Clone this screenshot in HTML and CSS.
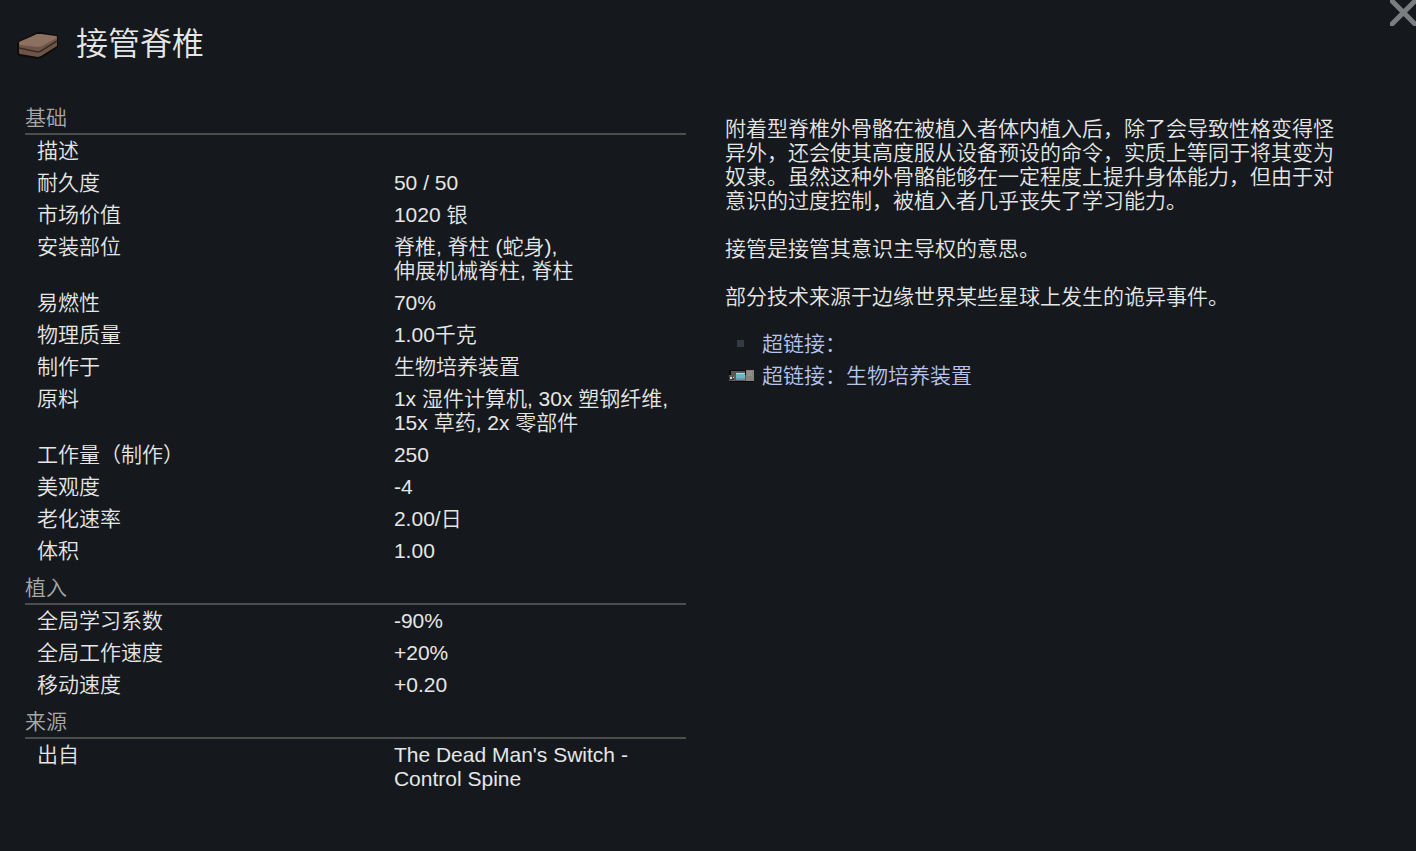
FILE: index.html
```html
<!DOCTYPE html>
<html lang="zh-CN">
  <head>
    <meta charset="utf-8">
    <meta name="viewport" content="width=device-width, initial-scale=1">
    <title>接管脊椎</title>

    <link rel="stylesheet" href="styles.css">
  </head>
  <body>
    <button class="fechar" type="button" aria-label="关闭">
      <svg width="26" height="26" viewBox="0 0 26 26">
        <path d="M0 -1 L27 26 M27 -1 L0 26" stroke="#7b7d7f" stroke-width="5" fill="none"/>
      </svg>
    </button>

    <header class="topo">
      <svg class="topo-icone" width="42" height="32" viewBox="0 0 42 32">
        <path d="M0 14 L20 4 L24 4 L40 7 L41 9 V19 L25 30 L21 31 L2 28 L0 26 Z" fill="#0e0c0b"/>
        <path d="M2 14 L21 18 L40 8 V18 L24 28 L21 29 L3 26 L2 25 Z" fill="#6d5648"/>
        <path d="M2 20 L21 24 L24 23 L40 13" stroke="#3a2c25" stroke-width="1.5" fill="none"/>
        <path d="M2 14 L20 6 L24 6 L39 8 L40 10 L25 18 L21 19 L3 17 Z" fill="#8c7060"/>
      </svg>
      <h1 class="titulo">接管脊椎</h1>
    </header>

    <main class="conteudo">
      <div class="atributos">
        <h2 class="secao">基础</h2>
        <table class="tabela">
          <tr><th scope="row">描述</th><td></td></tr>
          <tr><th scope="row">耐久度</th><td>50 / 50</td></tr>
          <tr><th scope="row">市场价值</th><td>1020 银</td></tr>
          <tr><th scope="row">安装部位</th><td>脊椎, 脊柱 (蛇身), 伸展机械脊柱, 脊柱</td></tr>
          <tr><th scope="row">易燃性</th><td>70%</td></tr>
          <tr><th scope="row">物理质量</th><td>1.00千克</td></tr>
          <tr><th scope="row">制作于</th><td>生物培养装置</td></tr>
          <tr><th scope="row">原料</th><td>1x 湿件计算机, 30x 塑钢纤维, 15x 草药, 2x 零部件</td></tr>
          <tr><th scope="row">工作量（制作）</th><td>250</td></tr>
          <tr><th scope="row">美观度</th><td>-4</td></tr>
          <tr><th scope="row">老化速率</th><td>2.00/日</td></tr>
          <tr><th scope="row">体积</th><td>1.00</td></tr>
        </table>

        <h2 class="secao">植入</h2>
        <table class="tabela">
          <tr><th scope="row">全局学习系数</th><td>-90%</td></tr>
          <tr><th scope="row">全局工作速度</th><td>+20%</td></tr>
          <tr><th scope="row">移动速度</th><td>+0.20</td></tr>
        </table>

        <h2 class="secao">来源</h2>
        <table class="tabela">
          <tr><th scope="row">出自</th><td>The Dead Man's Switch - Control Spine</td></tr>
        </table>
      </div>

      <div class="descricao">
        <p>附着型脊椎外骨骼在被植入者体内植入后，除了会导致性格变得怪异外，还会使其高度服从设备预设的命令，实质上等同于将其变为奴隶。虽然这种外骨骼能够在一定程度上提升身体能力，但由于对意识的过度控制，被植入者几乎丧失了学习能力。</p>
        <p>接管是接管其意识主导权的意思。</p>
        <p>部分技术来源于边缘世界某些星球上发生的诡异事件。</p>

        <ul class="links">
          <li>
            <a href="#">
              <svg width="26" height="14" viewBox="0 0 26 14">
                <rect x="9" y="3" width="7" height="7" fill="#353942"/>
              </svg>
              超链接：
            </a>
          </li>
          <li>
            <a href="#">
              <svg width="26" height="14" viewBox="0 0 26 14">
                <rect x="1" y="1" width="25" height="12" fill="#08090a"/>
                <rect x="3" y="2" width="14" height="4" fill="#565654"/>
                <rect x="1" y="6" width="24" height="6" fill="#5c5b58"/>
                <rect x="1" y="8" width="5" height="3" fill="#3c3c3a"/>
                <rect x="2" y="8" width="2" height="2" fill="#d6d6d2"/>
                <rect x="5" y="8" width="1" height="1" fill="#d6d6d2"/>
                <rect x="8" y="4" width="9" height="7" fill="#6fb3c6"/>
                <rect x="8" y="4" width="9" height="1" fill="#a3dbe6"/>
                <rect x="8" y="9" width="9" height="2" fill="#5b9cae"/>
                <rect x="18" y="1" width="8" height="11" fill="#85817d"/>
                <rect x="19" y="2" width="5" height="5" fill="#918d88"/>
              </svg>
              超链接：生物培养装置
            </a>
          </li>
        </ul>
      </div>
    </main>
  </body>
</html>
```

FILE: styles.css
```css
* {
  box-sizing: border-box;
}

body {
  margin: 0;
  min-height: 100vh;
  background-color: #15191d;
  color: #e6e6e6;
  font-family: "Liberation Sans", "Noto Sans CJK SC", sans-serif;
  font-size: 21px;
  font-weight: 350;
  line-height: 24px;
}

.fechar {
  position: absolute;
  top: 0;
  right: 0;
  padding: 0;
  border: 0;
  background: none;
  cursor: pointer;
}
.fechar svg {
  display: block;
}

.topo {
  display: flex;
  align-items: center;
  gap: 17px;
  padding: 24px 30px 0 17px;
}
.titulo {
  margin: 0;
  font-size: 32px;
  font-weight: 350;
  line-height: 40px;
}

.conteudo {
  display: grid;
  grid-template-columns: 1fr 1fr;
  gap: 39px;
  padding: 33px 30px 24px 25px;
}

/* coluna da esquerda */
.secao {
  margin: 9px 0 0;
  padding-bottom: 3px;
  border-bottom: 2px solid #4d4d4d;
  color: #a8a8a8;
  font-size: 21px;
  font-weight: 350;
}

.tabela {
  width: 100%;
  border-collapse: collapse;
  table-layout: fixed;
}
.tabela th, .tabela td {
  padding: 4px 0 4px 12px;
  font-weight: 350;
  line-height: 24px;
  text-align: left;
  vertical-align: top;
  word-break: keep-all;
}
.tabela th {
  width: 54%;
}

/* coluna da direita */
.descricao {
  padding: 20px 40px 0 0;
}
.descricao p {
  margin: 0 0 24px;
}

.links {
  list-style: none;
  margin: -5px 0 0;
  padding: 0 0 0 3px;
}
.links a {
  display: flex;
  align-items: center;
  gap: 8px;
  padding: 4px 0;
  color: #b8c4ec;
  text-decoration: none;
}
```
